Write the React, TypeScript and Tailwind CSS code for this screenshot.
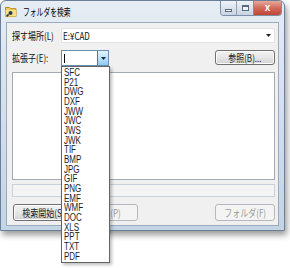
import React from "react";

const items = [
  "SFC", "P21", "DWG", "DXF", "JWW", "JWC", "JWS", "JWK", "TIF", "BMP",
  "JPG", "GIF", "PNG", "EMF", "WMF", "DOC", "XLS", "PPT", "TXT", "PDF",
];

function Sx({ children, className = "" }: { children: React.ReactNode; className?: string }) {
  return <span className={`inline-block whitespace-nowrap scale-x-80 ${className}`}>{children}</span>;
}

function FolderIcon() {
  return (
    <svg width="12" height="11" viewBox="0 0 12 11">
      <path d="M0.5 1.5h4l1 1.2h5.5v7.8h-10.5z" fill="#f3cd5a" stroke="#b58a1c" strokeWidth="1" />
      <path d="M0.5 4h10.5v6.5h-10.5z" fill="#f9df86" />
      <circle cx="5.5" cy="7" r="2" fill="#2d3a4a" />
      <path d="M3.6 8.4l-2 2" stroke="#2d3a4a" strokeWidth="1.6" />
    </svg>
  );
}

function Button({ label, disabled = false, className = "" }: { label: string; disabled?: boolean; className?: string }) {
  return (
    <div
      className={`w-[60px] flex items-center justify-center rounded-[3px] border ${
        disabled
          ? "border-[#b5b9bd] bg-[#f4f4f4] text-[#9a9a9a]"
          : "border-[#707070] bg-gradient-to-b from-[#f3f3f3] via-[#e6e6e6] to-[#d2d2d2] text-[#1a1a1a] shadow-[inset_0_0_0_1px_#fcfcfc]"
      } ${className}`}
    >
      <Sx className="origin-center">{label}</Sx>
    </div>
  );
}

export default function App() {
  return (
    <div className="w-[290px] h-[268px] bg-white relative text-[10px] leading-none font-['Noto_Sans_CJK_JP','Liberation_Sans',sans-serif] text-[#111]">
      {/* window */}
      <div className="w-[285px] h-[231px] rounded-t-[6px] border border-[#6a8099] bg-gradient-to-b from-[#e6edf4] via-[#d3dfea] to-[#c3d4e5] flex flex-col shadow-[2px_4px_6px_rgba(0,0,0,0.4)]">
        <div className="h-[21px] flex items-start">
          <div className="mt-[5px] ml-[4px]">
            <FolderIcon />
          </div>
          <div className="ml-[6px] mt-[6px] text-[10px] text-black">
            <Sx className="origin-left scale-x-[0.68]">フォルダを検索</Sx>
          </div>
          <div className="ml-auto mr-[2px] flex h-[15px] rounded-b-[4px] border border-t-0 border-[#7d8fa3] overflow-hidden">
            <div className="w-[16px] flex items-end justify-center pb-[3px] bg-gradient-to-b from-[#eef3f8] via-[#dbe4ee] to-[#c6d4e2] border-r border-[#93a3b4]">
              <div className="w-[7px] h-[3px] bg-white border border-[#5a6a7a]" />
            </div>
            <div className="w-[17px] flex items-center justify-center bg-gradient-to-b from-[#eef3f8] via-[#dbe4ee] to-[#c6d4e2] border-r border-[#7d8fa3]">
              <div className="w-[7px] h-[6px] border border-[#5a6a7a] border-t-2 bg-white/60" />
            </div>
            <div className="w-[27px] flex items-center justify-center bg-gradient-to-b from-[#e8a89d] via-[#d26a5b] to-[#c04433]">
              <span className="text-white font-['Liberation_Sans',sans-serif] text-[10px] font-bold leading-none">x</span>
            </div>
          </div>
        </div>

        {/* client area */}
        <div className="flex-1 mx-[5px] mb-[4px] border border-[#9aabbd] bg-[#f0f0f0] flex flex-col pl-[5px] pr-[3px]">
          <div className="mt-[5px] h-[15px] flex items-center">
            <div className="w-[49px]">
              <Sx className="origin-left">探す場所(L)</Sx>
            </div>
            <div className="flex-1 h-full bg-white border border-[#e3e3e3] flex items-center pl-[1px] pr-[3px]">
              <Sx className="origin-left">E:¥CAD</Sx>
              <svg className="ml-auto" width="5" height="3" viewBox="0 0 5 3">
                <path d="M0 0h5l-2.5 3z" fill="#222" />
              </svg>
            </div>
          </div>

          <div className="mt-[7px] h-[16px] flex items-start">
            <div className="w-[49px] h-[15px] flex items-center">
              <Sx className="origin-left">拡張子(E):</Sx>
            </div>
            <div className="relative w-[48px] h-[16px] border border-[#6d8fb0] bg-white flex">
              <div className="flex-1 flex items-center pl-[2px]">
                <div className="w-px h-[9px] bg-black" />
              </div>
              <div className="w-[11px] flex items-center justify-center border-l border-[#3c7fb1] bg-gradient-to-b from-[#e3f3fd] via-[#bfe3f9] to-[#8ccbf1]">
                <svg width="5" height="3" viewBox="0 0 5 3">
                  <path d="M0 0h5l-2.5 3z" fill="#1c2a3a" />
                </svg>
              </div>
              {/* open dropdown list */}
              <div className="absolute left-[-1px] top-[15px] w-[49px] z-10 bg-white border border-[#646464] shadow-[2px_2px_3px_rgba(0,0,0,0.25)] py-[1px] font-['Liberation_Sans','Noto_Sans_CJK_JP',sans-serif] text-[10px] text-[#1b1b2b]">
                {items.map((it) => (
                  <div key={it} className="h-[9.68px] flex items-center pl-[2px]">
                    <Sx className="origin-left">{it}</Sx>
                  </div>
                ))}
              </div>
            </div>
            <Button label="参照(B)..." className="ml-auto h-[15px]" />
          </div>

          <div className="mt-[6px] h-[108px] bg-white border border-[#a6abb3]" />

          <div className="mt-[4px] h-[13px] bg-[#f4f4f4] border border-[#c9d2da]" />

          <div className="mt-[7px] h-[17px] flex">
            <Button label="検索開始(S)" className="ml-[1px]" />
            <Button label="終了(P)" disabled className="ml-[5px]" />
            <Button label="フォルダ(F)" disabled className="ml-auto" />
          </div>
        </div>
      </div>
    </div>
  );
}
